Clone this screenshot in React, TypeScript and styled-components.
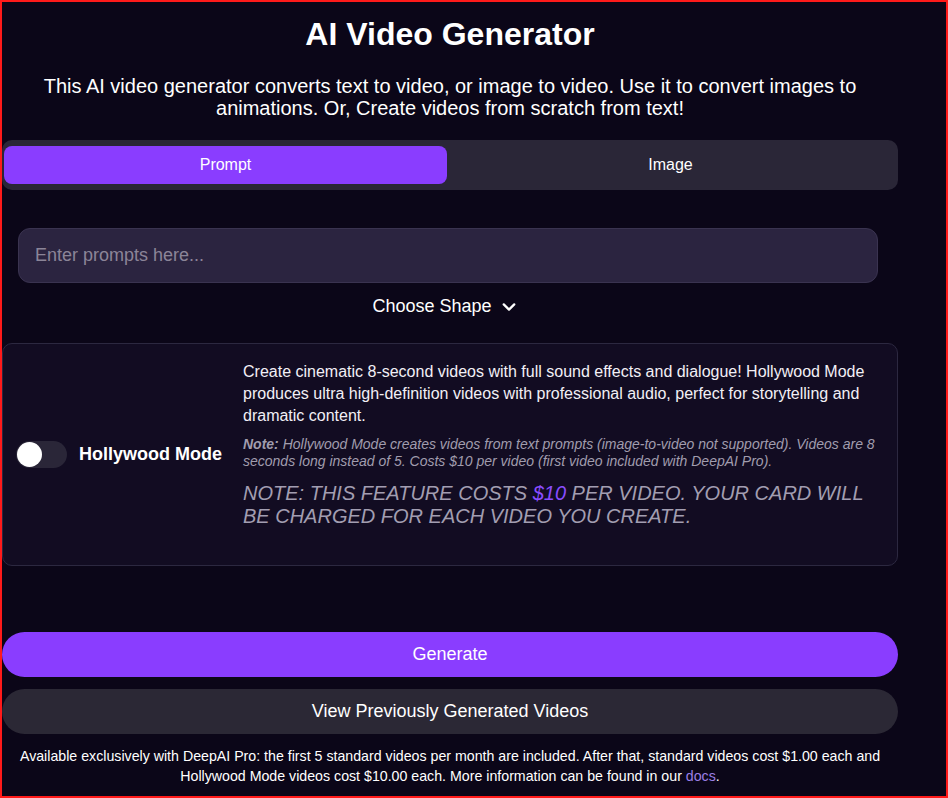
import React, { useState } from 'react';
import styled, { createGlobalStyle } from 'styled-components';

const GlobalStyle = createGlobalStyle`
  html, body {
    margin: 0;
    padding: 0;
    background: #0b0618;
  }
  body {
    font-family: "Liberation Sans", Arial, sans-serif;
    color: #ffffff;
  }
  * { box-sizing: border-box; }
`;

const Frame = styled.div`
  width: 948px;
  height: 798px;
  border: 2px solid #ff1a1a;
  background: #0b0618;
  overflow: hidden;
`;

const Column = styled.main`
  width: 896px;
  display: flex;
  flex-direction: column;
`;

const Title = styled.h1`
  margin: 13px 0 0;
  font-size: 32px;
  font-weight: 700;
  line-height: 38px;
  text-align: center;
`;

const Lead = styled.p`
  margin: 22px 40px 0;
  font-size: 20px;
  line-height: 22px;
  text-align: center;
`;

const Tabs = styled.div`
  margin-top: 21px;
  display: grid;
  grid-template-columns: 1fr 1fr;
  gap: 2px;
  padding: 6px 6px 6px 2px;
  background: #2a2637;
  border-radius: 10px;
`;

const Tab = styled.button<{ $active?: boolean }>`
  height: 38px;
  border: 0;
  border-radius: 8px;
  font-family: inherit;
  font-size: 16px;
  color: #ffffff;
  background: ${p => (p.$active ? '#8a3dff' : 'transparent')};
  cursor: pointer;
`;

const PromptInput = styled.input`
  margin: 38px 20px 0 16px;
  height: 55px;
  padding: 0 16px;
  border: 1px solid #3a3350;
  border-radius: 12px;
  background: #2b2440;
  font-family: inherit;
  font-size: 18px;
  color: #ffffff;
  outline: none;

  &::placeholder {
    color: #8b8598;
  }
`;

const ShapeToggle = styled.button`
  align-self: center;
  margin: 12px 10px 0 0;
  padding: 1px 6px;
  display: flex;
  align-items: center;
  gap: 8px;
  border: 0;
  background: transparent;
  font-family: inherit;
  font-size: 18px;
  line-height: 21px;
  color: #ffffff;
  cursor: pointer;
`;

const ModeCard = styled.section`
  margin-top: 25px;
  display: grid;
  grid-template-columns: 240px 1fr;
  align-items: center;
  min-height: 223px;
  padding: 17px 18px 18px 0;
  border: 1px solid #2c2840;
  border-radius: 10px;
  background: #120c22;
`;

const ModeSwitch = styled.label`
  display: flex;
  align-items: center;
  gap: 12px;
  padding-left: 13px;
  font-size: 18px;
  font-weight: 700;
`;

const Track = styled.span<{ $on: boolean }>`
  width: 51px;
  height: 27px;
  border-radius: 14px;
  background: ${p => (p.$on ? '#8a3dff' : '#2a2638')};
  display: flex;
  align-items: center;
  padding: 0 1px;
  justify-content: ${p => (p.$on ? 'flex-end' : 'flex-start')};
`;

const Knob = styled.span`
  width: 25px;
  height: 25px;
  border-radius: 50%;
  background: #ffffff;
`;

const ModeText = styled.div`
  align-self: start;
  display: flex;
  flex-direction: column;
`;

const Blurb = styled.p`
  margin: 0;
  font-size: 16px;
  line-height: 22px;
  color: #f2f0f6;
`;

const SmallNote = styled.p`
  margin: 9px 0 0;
  font-size: 14px;
  line-height: 17px;
  font-style: italic;
  color: #a19dae;

  strong { font-weight: 700; }
`;

const Warning = styled.p`
  margin: 12px 0 0;
  font-size: 20px;
  line-height: 23px;
  font-style: italic;
  text-transform: uppercase;
  color: #a29eb1;

  em { color: #8a4dff; }
`;

const Actions = styled.div`
  margin-top: 66px;
  display: flex;
  flex-direction: column;
  gap: 12px;
`;

const ActionButton = styled.button<{ $primary?: boolean }>`
  height: 45px;
  border: 0;
  border-radius: 23px;
  font-family: inherit;
  font-size: 18px;
  color: #ffffff;
  background: ${p => (p.$primary ? '#8a3dff' : '#2b2835')};
  cursor: pointer;
`;

const Footnote = styled.p`
  margin: 12px 0 0;
  font-size: 14.2px;
  line-height: 20px;
  text-align: center;
  color: #ffffff;

  a {
    color: #9b7fe6;
    text-decoration: none;
  }
`;

const Chevron = () => (
  <svg width="18" height="18" viewBox="0 0 24 24" fill="none" stroke="currentColor" strokeWidth="3" strokeLinecap="round" strokeLinejoin="round">
    <path d="M5 8.5l7 7 7-7" />
  </svg>
);

export default function App() {
  const [tab, setTab] = useState<'prompt' | 'image'>('prompt');
  const [hollywood, setHollywood] = useState(false);

  return (
    <>
      <GlobalStyle />
      <Frame>
        <Column>
          <Title>AI Video Generator</Title>
          <Lead>
            This AI video generator converts text to video, or image to video. Use it to convert images to animations. Or, Create videos from scratch from text!
          </Lead>

          <Tabs>
            <Tab $active={tab === 'prompt'} onClick={() => setTab('prompt')}>Prompt</Tab>
            <Tab $active={tab === 'image'} onClick={() => setTab('image')}>Image</Tab>
          </Tabs>

          <PromptInput placeholder="Enter prompts here..." />

          <ShapeToggle>
            Choose Shape <Chevron />
          </ShapeToggle>

          <ModeCard>
            <ModeSwitch onClick={() => setHollywood(v => !v)}>
              <Track $on={hollywood}>
                <Knob />
              </Track>
              Hollywood Mode
            </ModeSwitch>
            <ModeText>
              <Blurb>
                Create cinematic 8-second videos with full sound effects and dialogue! Hollywood Mode produces ultra high-definition videos with professional audio, perfect for storytelling and dramatic content.
              </Blurb>
              <SmallNote>
                <strong>Note:</strong> Hollywood Mode creates videos from text prompts (image-to-video not supported). Videos are 8 seconds long instead of 5. Costs $10 per video (first video included with DeepAI Pro).
              </SmallNote>
              <Warning>
                Note: this feature costs <em>$10</em> per video. Your card will be charged for each video you create.
              </Warning>
            </ModeText>
          </ModeCard>

          <Actions>
            <ActionButton $primary>Generate</ActionButton>
            <ActionButton>View Previously Generated Videos</ActionButton>
          </Actions>

          <Footnote>
            Available exclusively with DeepAI Pro: the first 5 standard videos per month are included. After that, standard videos cost $1.00 each and Hollywood Mode videos cost $10.00 each. More information can be found in our <a href="#docs">docs</a>.
          </Footnote>
        </Column>
      </Frame>
    </>
  );
}
